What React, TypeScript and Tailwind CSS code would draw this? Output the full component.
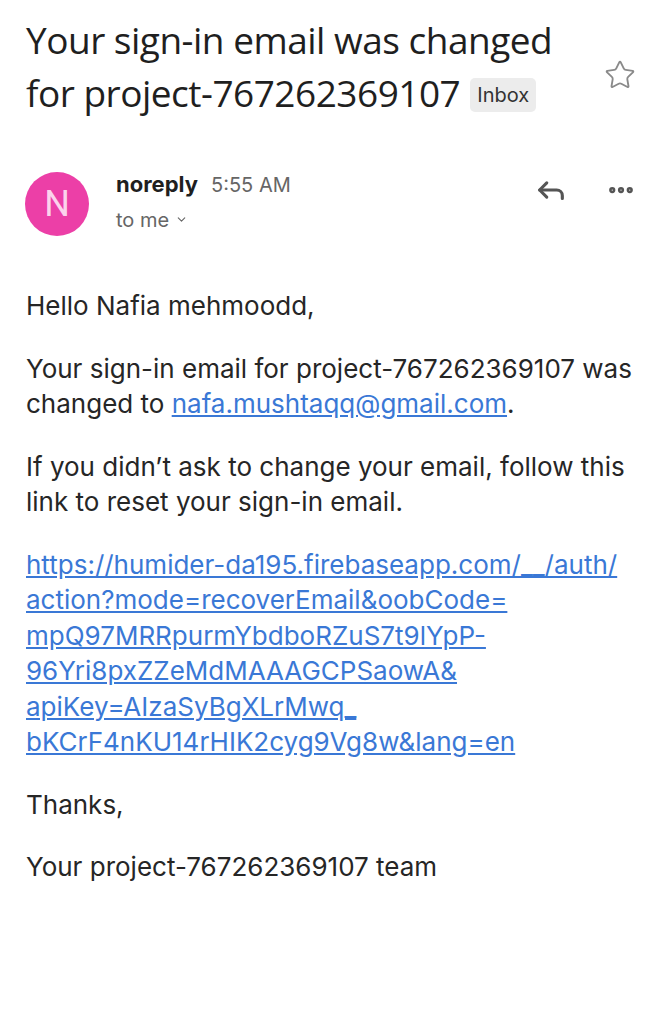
import { Star, Reply, MoreHorizontal, ChevronDown } from "lucide-react"

const url =
  "https://humider-da195.firebaseapp.com/__/auth/action?mode=recoverEmail&oobCode=mpQ97MRRpurmYbdboRZuS7t9lYpP-96Yri8pxZZeMdMAAAGCPSaowA&apiKey=AIzaSyBgXLrMwq_bKCrF4nKU14rHIK2cyg9Vg8w&lang=en"

const urlLines = [
  "https://humider-da195.firebaseapp.com/__/auth/",
  "action?mode=recoverEmail&oobCode=",
  "mpQ97MRRpurmYbdboRZuS7t9lYpP-",
  "96Yri8pxZZeMdMAAAGCPSaowA&",
  "apiKey=AIzaSyBgXLrMwq_",
  "bKCrF4nKU14rHIK2cyg9Vg8w&lang=en",
]

export default function App() {
  return (
    <div className="w-[666px] h-[1024px] bg-white overflow-hidden font-['Inter',sans-serif] text-[#222]">
      {/* Subject */}
      <div className="flex pl-[26px] pr-[30px] pt-[13px]">
        <h1 className="flex-1 text-[37px] leading-[53px] text-[#1f1f1f] font-['Open_Sans',sans-serif] tracking-[-0.5px]">
          Your sign-in email was changed
          <br />
          for project-767262369107
          <span className="inline-block align-[5px] ml-[10px] px-[7px] h-[34px] leading-[34px] rounded-[5px] bg-[#ececec] text-[20px] text-[#333] font-['Inter',sans-serif] tracking-normal">
            Inbox
          </span>
        </h1>
        <Star className="mt-[46px] w-[32px] h-[32px] text-[#8a8a8a]" strokeWidth={1.4} />
      </div>

      {/* Sender row */}
      <div className="flex items-center pl-[25px] pr-[30px] mt-[53px]">
        <div className="w-[64px] h-[64px] rounded-full bg-[#ec3fa7] flex items-center justify-center text-[36px] text-[#fbd3ec] font-['Roboto',sans-serif]">
          N
        </div>
        <div className="flex-1 ml-[27px] -mt-[6px]">
          <div className="flex items-baseline gap-[13px]">
            <span className="text-[22px] font-bold text-[#1f1f1f]">noreply</span>
            <span className="text-[20px] text-[#666]">5:55 AM</span>
          </div>
          <div className="flex items-center gap-[6px] mt-[4px] text-[20px] text-[#666]">
            to me
            <ChevronDown className="w-[13px] h-[13px]" strokeWidth={2} />
          </div>
        </div>
        <div className="flex items-center gap-[38px] -mt-[28px]">
          <Reply className="w-[34px] h-[34px] text-[#555]" strokeWidth={2.2} />
          <MoreHorizontal className="w-[30px] h-[30px] text-[#555]" strokeWidth={3} />
        </div>
      </div>

      {/* Body */}
      <div className="pl-[26px] pr-[16px] mt-[52px] text-[26px] leading-[35.5px] text-[#262626] flex flex-col gap-[27px]">
        <p>Hello Nafia mehmoodd,</p>
        <p>
          Your sign-in email for project-767262369107 was changed to{" "}
          <a href="mailto:nafa.mushtaqq@gmail.com" className="text-[#3a78d6] underline">
            nafa.mushtaqq@gmail.com
          </a>
          .
        </p>
        <p>
          If you didn’t ask to change your email, follow this
          <br />
          link to reset your sign-in email.
        </p>
        <a href={url} className="text-[#3a78d6] underline flex flex-col">
          {urlLines.map((l) => (
            <span key={l}>{l}</span>
          ))}
        </a>
        <p>Thanks,</p>
        <p>Your project-767262369107 team</p>
      </div>
    </div>
  )
}
